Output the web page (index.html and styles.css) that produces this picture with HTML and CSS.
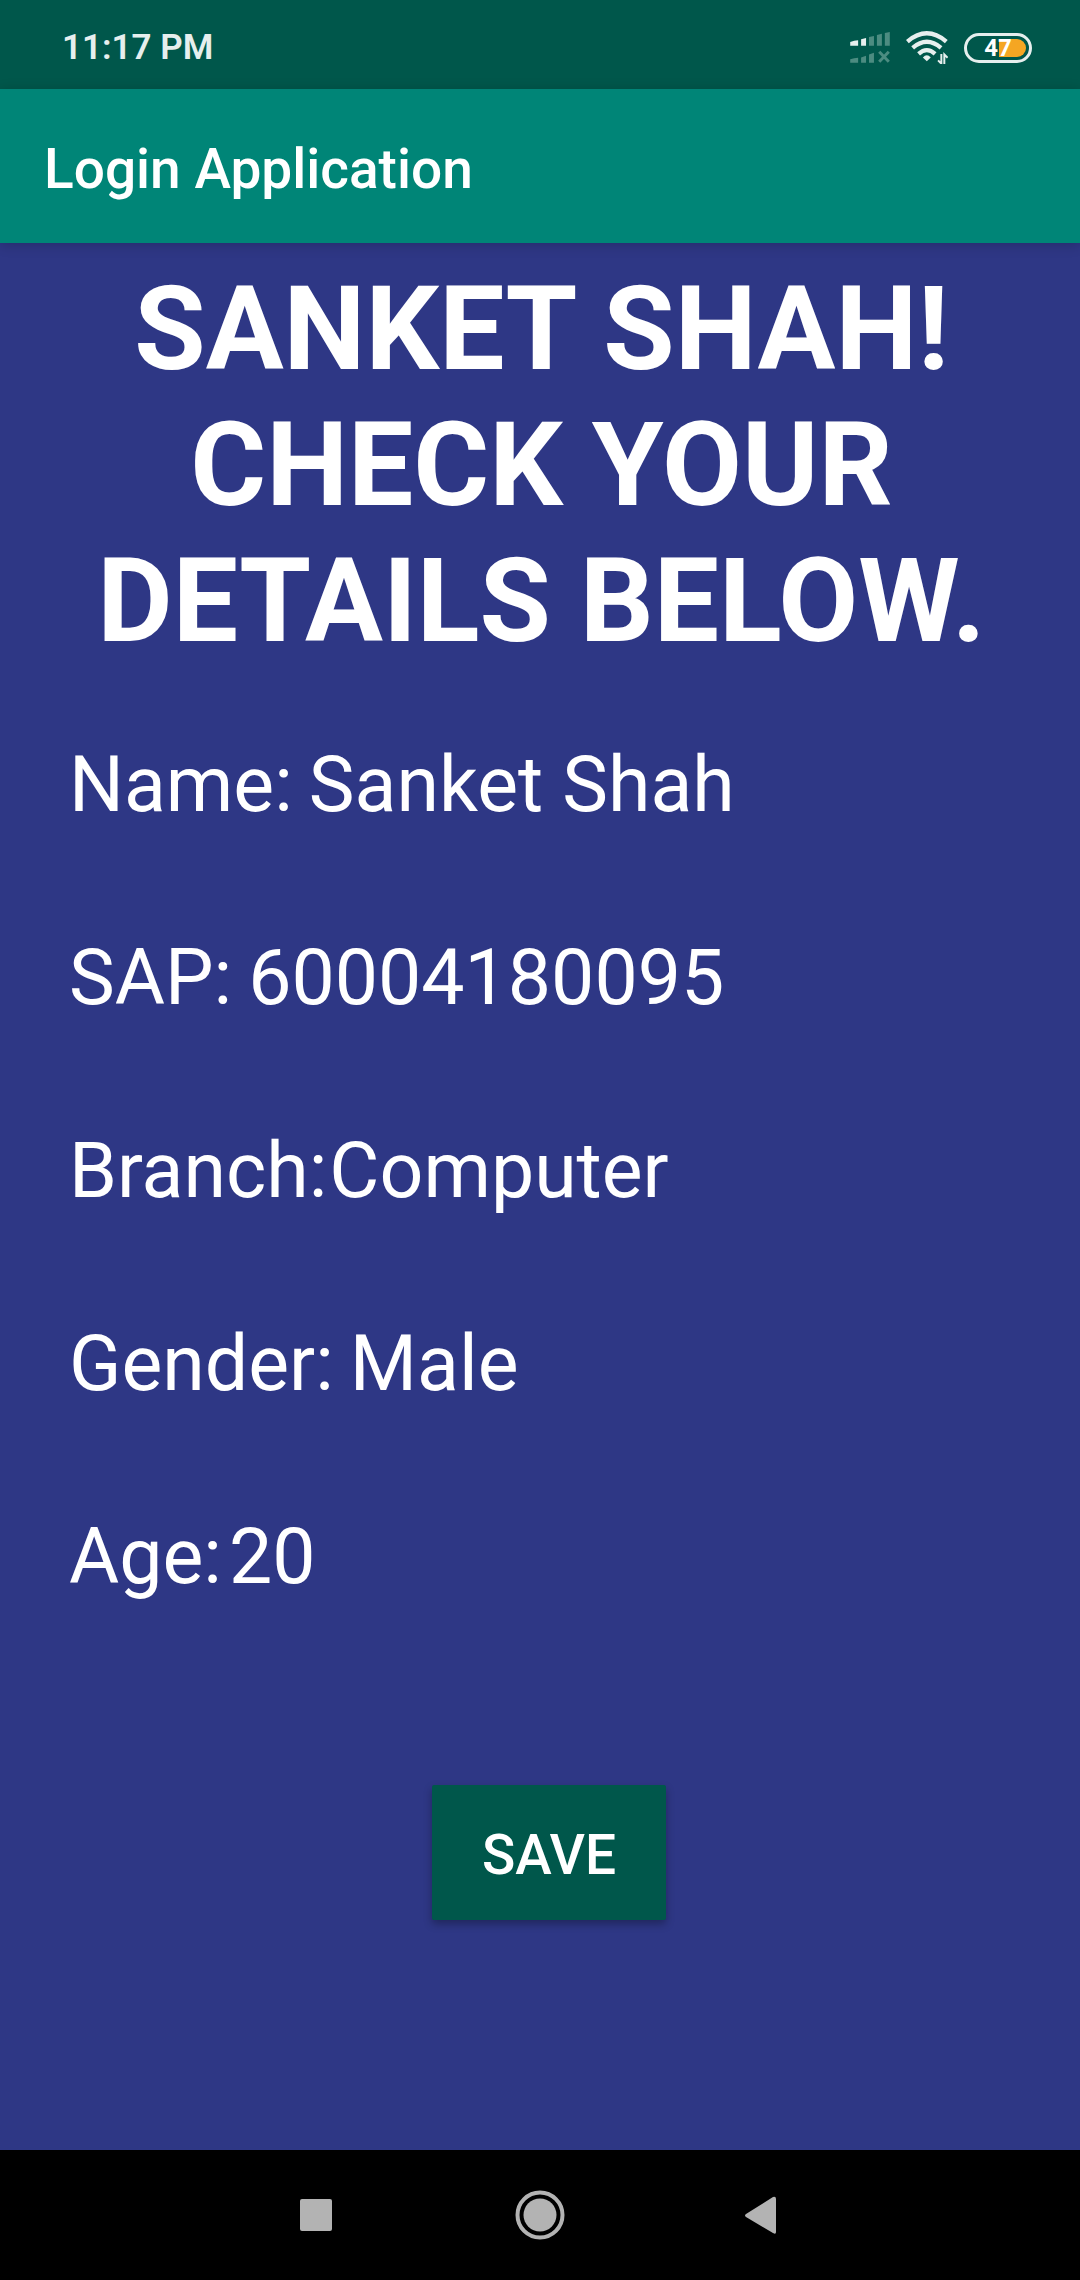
FILE: index.html
```html
<!DOCTYPE html>
<html lang="en">
<head>
<meta charset="utf-8">
<meta name="viewport" content="width=device-width, initial-scale=1">
<title>Login Application</title>
<link rel="stylesheet" href="styles.css">
</head>
<body>
<div class="screen">
  <div class="status-bar">
    <time class="clock">11:17 PM</time>
    <div class="status-icons">
      <svg class="signal" viewBox="60 66 120 94" aria-hidden="true">
        <g fill="#e6efee">
          <path d="M60 96Q72 92 84 91V108H60Z"/>
          <path d="M93 88L108 84V108H93Z"/>
        </g>
        <g fill="#4c8c81">
          <path d="M117 81L132 78V108H117ZM141 75L156 71V108H141ZM165 69L180 66V108H165Z"/>
          <path d="M60 149Q72 145 84 144V159H60ZM93 143L108 138V159H93ZM117 134L132 129V159H117Z"/>
        </g>
        <path d="M148 126L177 156M177 126L148 156" stroke="#4c8c81" stroke-width="9"/>
      </svg>
      <svg class="wifi" viewBox="228 65 127 100" aria-hidden="true">
        <g fill="none" stroke="#e6efee" stroke-width="13">
          <path d="M232 97Q291 47 350 97"/>
          <path d="M248 116Q291 79 334 116"/>
          <path d="M266 134Q291 112 316 134"/>
        </g>
        <path d="M279 145Q291 132 303 145L291 157Z" fill="#e6efee"/>
        <path d="M335 135V164L325 154M344 165V136L354 146" fill="none" stroke="#e6efee" stroke-width="6"/>
      </svg>
      <div class="battery"><span class="battery-fill"></span><span class="battery-level">47</span></div>
    </div>
  </div>
  <header class="app-bar">Login Application</header>
  <main class="content">
    <h1 class="heading">SANKET SHAH! CHECK YOUR DETAILS BELOW.</h1>
    <dl class="details">
      <div class="detail"><dt>Name:</dt><dd>Sanket Shah</dd></div>
      <div class="detail"><dt>SAP:</dt><dd>60004180095</dd></div>
      <div class="detail joined"><dt>Branch:</dt><dd>Computer</dd></div>
      <div class="detail"><dt>Gender:</dt><dd>Male</dd></div>
      <div class="detail tight"><dt>Age:</dt><dd>20</dd></div>
    </dl>
    <div class="actions"><button class="save" type="button">SAVE</button></div>
  </main>
  <nav class="nav-bar" aria-label="System navigation">
    <button class="nav-button" type="button" aria-label="Recent apps">
      <svg viewBox="0 0 50 50"><rect x="9" y="9" width="32" height="32" rx="2"/></svg>
    </button>
    <button class="nav-button" type="button" aria-label="Home">
      <svg viewBox="0 0 50 50"><circle cx="25" cy="25" r="16.5"/><circle class="ring" cx="25" cy="25" r="22.5"/></svg>
    </button>
    <button class="nav-button" type="button" aria-label="Back">
      <svg viewBox="0 0 50 50"><path d="M7 24L34 7Q37 6 37 9V42Q37 45 34 43L7 27Q5 25.500 7 24Z"/></svg>
    </button>
  </nav>
</div>
</body>
</html>
```
FILE: styles.css
```css
* {
  box-sizing: border-box;
}

body {
  margin: 0;
  background: #2e3785;
  color: #fff;
  font-family: Roboto, "Noto Sans", sans-serif;
}

.screen {
  display: flex;
  flex-direction: column;
  min-height: 100vh;
}

.status-bar {
  display: flex;
  align-items: center;
  justify-content: space-between;
  height: 89px;
  padding: 6px 48px 0 62px;
  background: #00574b;
}

.clock {
  color: #e6efee;
  font-size: 35px;
  font-weight: 600;
  line-height: 40px;
}

.status-icons {
  display: flex;
  align-items: center;
  gap: 16px;
}

.signal {
  width: 40px;
  height: 31px;
}

.wifi {
  width: 42px;
  height: 33px;
}

.battery {
  position: relative;
  width: 68px;
  height: 30px;
  border: 3px solid #e6efee;
  border-radius: 15px;
  text-align: center;
}

.battery-fill {
  position: absolute;
  top: 3px;
  right: 3px;
  width: 27px;
  height: 18px;
  border-radius: 0 9px 9px 0;
  background: #f5a623;
}

.battery-level {
  position: relative;
  display: block;
  font-size: 24px;
  font-weight: 700;
  line-height: 24px;
}

.app-bar {
  position: relative;
  padding: 48px 44px 42px;
  background: #008577;
  box-shadow: 0 2px 12px rgba(0, 0, 0, 0.2);
  font-size: 55px;
  font-weight: 500;
  line-height: 64px;
}

.content {
  flex: 1;
  padding: 18px 66px 0 69px;
}

.heading {
  margin: 0 0 71px;
  font-size: 116px;
  font-weight: 700;
  line-height: 136px;
  text-align: center;
}

.details {
  display: grid;
  gap: 103px;
  margin: 0;
  font-size: 77px;
  line-height: 90px;
}

.detail {
  display: flex;
  gap: 16px;
}

.joined {
  gap: 2px;
}

.tight {
  gap: 7px;
}

.detail dd {
  margin: 0;
}

.actions {
  display: flex;
  justify-content: center;
  padding: 183px 0 80px 15px;
}

.save {
  min-width: 234px;
  padding: 38px 44px 32px;
  border: 0;
  border-radius: 2px;
  background: #00574b;
  box-shadow: 0 4px 8px rgba(0, 0, 0, 0.3);
  color: #fff;
  font-family: inherit;
  font-size: 55px;
  font-weight: 500;
  line-height: 65px;
}

.nav-bar {
  display: flex;
  align-items: center;
  justify-content: center;
  gap: 174px;
  height: 130px;
  background: #000;
}

.nav-button {
  width: 50px;
  height: 50px;
  padding: 0;
  border: 0;
  background: none;
}

.nav-button svg {
  display: block;
  width: 50px;
  height: 50px;
  fill: #b3b3b3;
}

.nav-button .ring {
  fill: none;
  stroke: #b3b3b3;
  stroke-width: 4;
}
```
